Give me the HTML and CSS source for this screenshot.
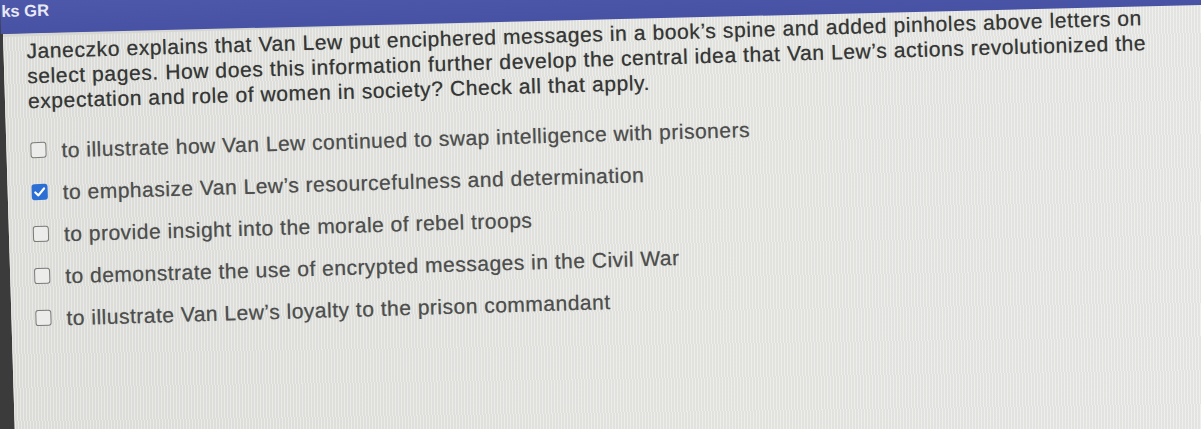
FILE: index.html
```html
<!DOCTYPE html>
<html lang="en">
<head>
<meta charset="utf-8">
<title>Check all that apply</title>
<link rel="stylesheet" href="styles.css">
</head>
<body>
<div class="topbar"><span class="crumb">ks GR</span></div>
<main class="panel">
  <p class="question">Janeczko explains that Van Lew put enciphered messages in a book’s spine and added pinholes above letters on<br>select pages. How does this information further develop the central idea that Van Lew’s actions revolutionized the<br>expectation and role of women in society? Check all that apply.</p>
  <ul class="options">
    <li class="option"><span class="box"></span><span class="label">to illustrate how Van Lew continued to swap intelligence with prisoners</span></li>
    <li class="option"><span class="box checked"><svg viewBox="0 0 16 16" width="16" height="16"><path d="M3.6 8.4 L6.6 11.3 L12.4 4.6" fill="none" stroke="#fff" stroke-width="2.2" stroke-linecap="round" stroke-linejoin="round"/></svg></span><span class="label">to emphasize Van Lew’s resourcefulness and determination</span></li>
    <li class="option"><span class="box"></span><span class="label">to provide insight into the morale of rebel troops</span></li>
    <li class="option"><span class="box"></span><span class="label">to demonstrate the use of encrypted messages in the Civil War</span></li>
    <li class="option"><span class="box"></span><span class="label">to illustrate Van Lew’s loyalty to the prison commandant</span></li>
  </ul>
</main>
</body>
</html>
```

FILE: styles.css
```css
html, body {
  margin: 0;
  padding: 0;
}
body {
  width: 1201px;
  height: 429px;
  overflow: hidden;
  background: #3b3b3b;
  font-family: "Liberation Sans", Arial, sans-serif;
}
.topbar {
  position: relative;
  z-index: 1;
  width: 1240px;
  height: 34px;
  background: linear-gradient(180deg, #4e58aa 0%, #4852a4 100%);
  transform-origin: 0 0;
  transform: rotate(-1.38deg);
  color: #e9e9f5;
  font-weight: 700;
  font-size: 16.5px;
  line-height: 22px;
  padding-left: 1px;
  box-sizing: border-box;
}
.crumb {
  display: inline-block;
}
.panel {
  display: block;
  width: 1250px;
  height: 440px;
  margin-left: 3px;
  box-sizing: border-box;
  border-top: 3px solid #d6d7d3;
  padding: 2px 0 0 23px;
  transform-origin: 0 0;
  transform: rotate(-1.7deg);
  background-color: #e3e4e0;
  background-image:
    repeating-linear-gradient(90deg, rgba(255,255,255,0.3) 0 1px, rgba(0,0,0,0.02) 1px 3px),
    linear-gradient(90deg, #dfe0dc 0%, #e5e6e2 50%, #e8e9e5 100%);
}
.question {
  margin: 0;
  font-size: 21px;
  line-height: 25px;
  letter-spacing: 0.6px;
  color: #363636;
  white-space: nowrap;
  text-shadow: 0 0 0.7px rgba(40, 40, 40, 0.55);
}
.options {
  list-style: none;
  margin: 17px 0 0 0;
  padding: 0 0 0 1px;
}
.option {
  display: flex;
  align-items: center;
  height: 42px;
  gap: 15px;
}
.box {
  flex: none;
  width: 16px;
  height: 16px;
  box-sizing: border-box;
  border: 1.6px solid #7a7a78;
  border-radius: 3px;
  background: #ecedea;
  margin-top: -3px;
  display: flex;
  align-items: center;
  justify-content: center;
}
.box.checked {
  border: none;
  background: #2c6fd4;
}
.box svg {
  display: block;
}
.label {
  font-size: 21px;
  line-height: 42px;
  letter-spacing: 0.5px;
  color: #4e4e4e;
  white-space: nowrap;
  text-shadow: 0 0 0.7px rgba(60, 60, 60, 0.5);
}
```
